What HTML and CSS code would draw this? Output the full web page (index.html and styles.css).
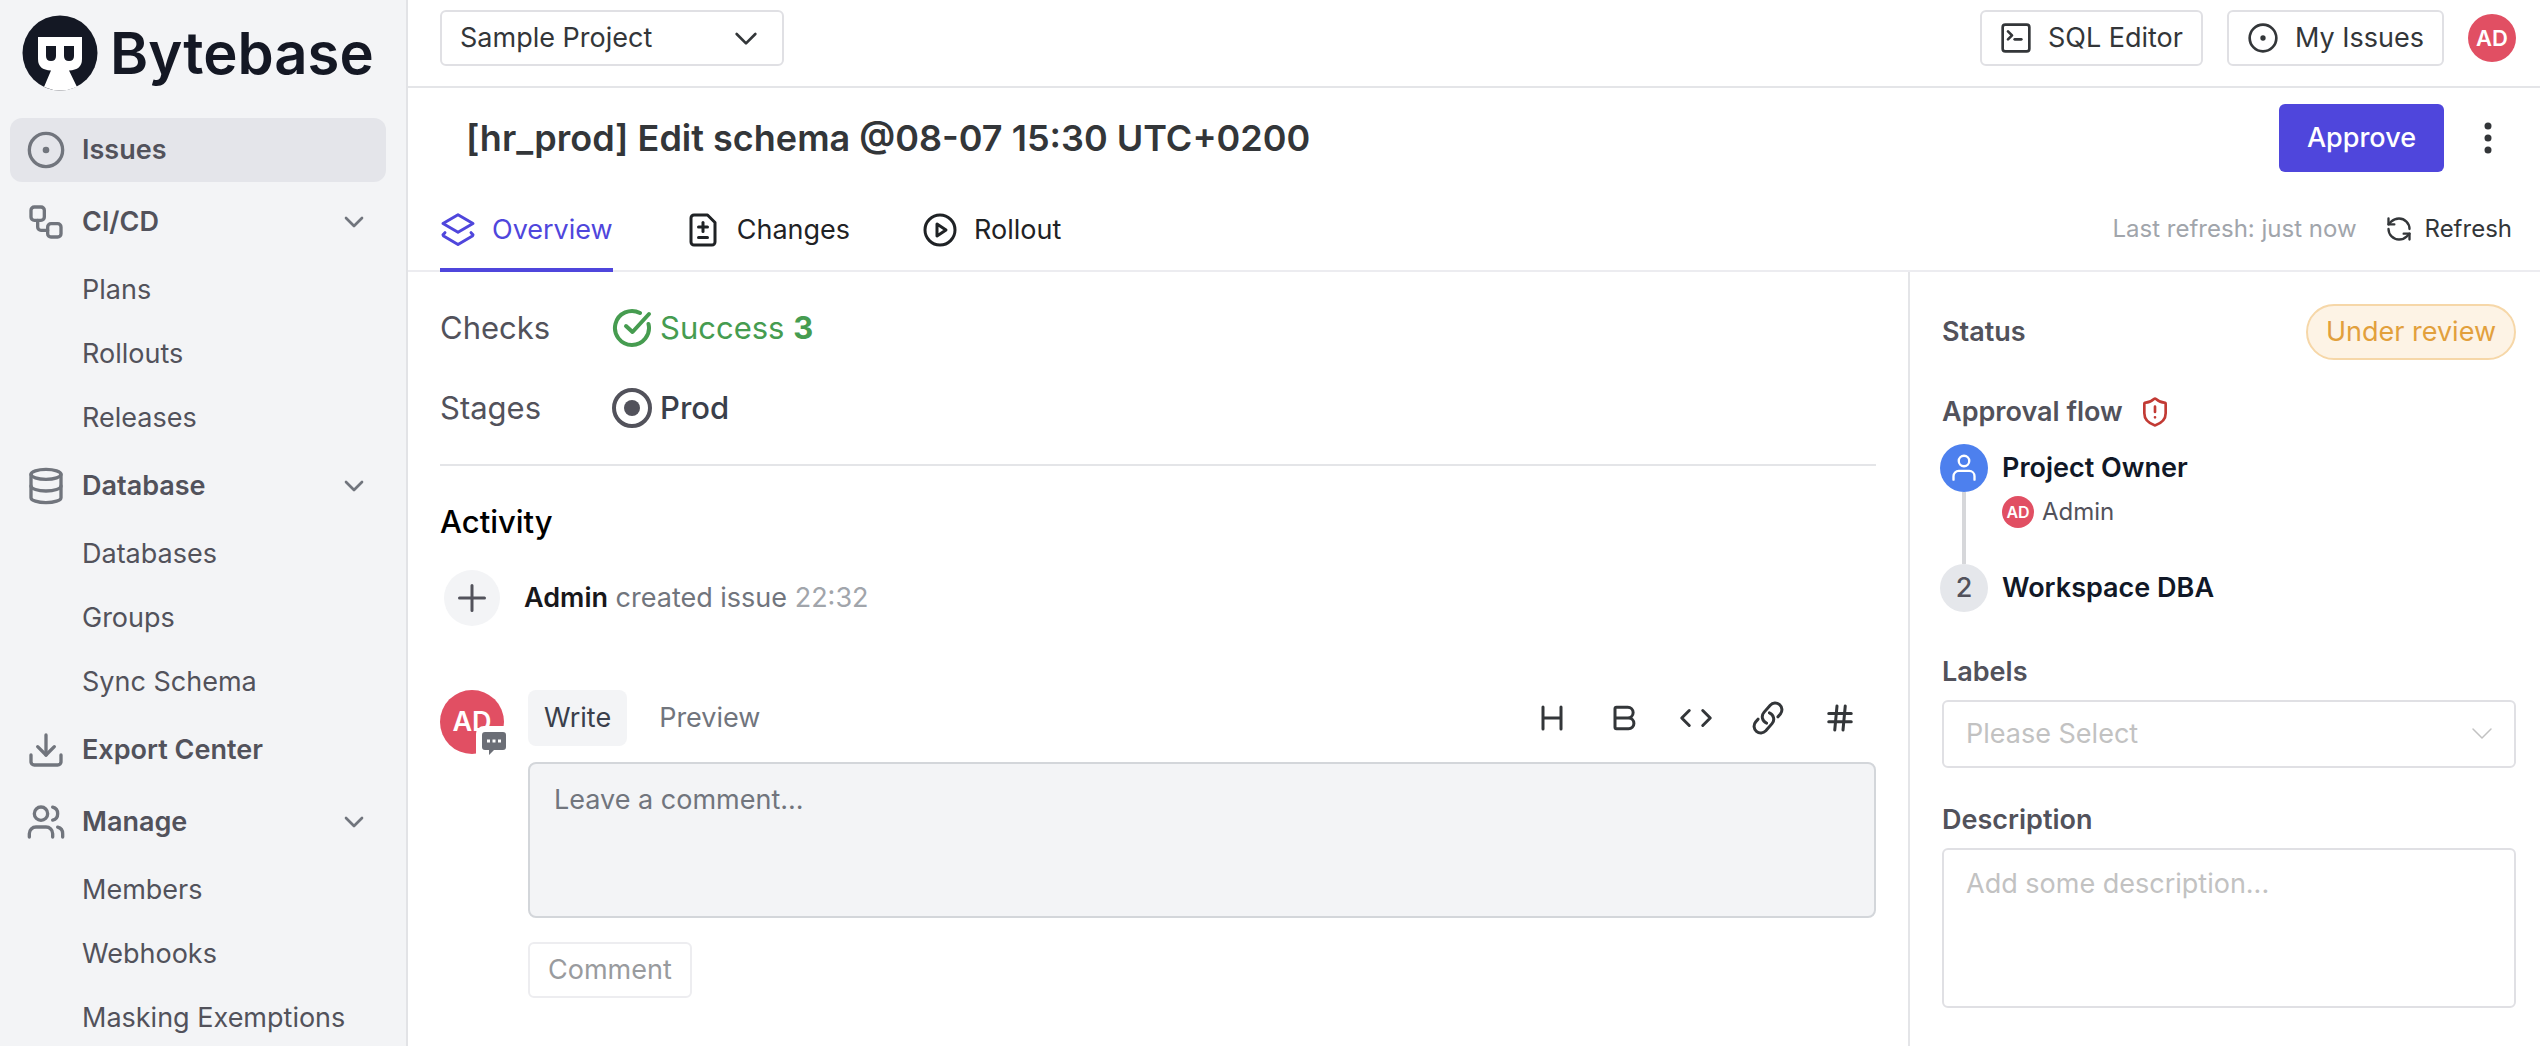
FILE: index.html
```html
<!DOCTYPE html>
<html lang="en">
<head>
<meta charset="utf-8">
<meta name="viewport" content="width=device-width, initial-scale=1">
<title>[hr_prod] Edit schema - Bytebase</title>
<link rel="stylesheet" href="styles.css">
</head>
<body>
<div class="app">
  <aside class="sidebar">
    <a class="brand" href="#">
      <svg class="brand-mark" viewBox="0 0 76 76" aria-hidden="true">
        <circle cx="38" cy="38" r="37.500" fill="#141824"/>
        <path d="M16 22H60V44Q60 55 47 55.500L55 72Q38 79 22 72L29 55.500Q16 55 16 44Z" fill="#fff"/>
        <path d="M24 31H34V41Q34 46 29 46Q24 46 24 41ZM42 31H52V41Q52 46 47 46Q42 46 42 41Z" fill="#141824"/>
      </svg>
      <span class="brand-name">Bytebase</span>
    </a>
    <nav class="nav" aria-label="Project">
      <a class="nav-item is-active" href="#">
        <svg class="icon icon-nav" viewBox="0 0 24 24"><circle cx="12" cy="12" r="10"/><circle cx="12" cy="12" r="1"/></svg>
        <span>Issues</span>
      </a>
      <button class="nav-item" type="button">
        <svg class="icon icon-nav" viewBox="0 0 24 24"><rect x="3" y="3" width="8" height="8" rx="2"/><path d="M7 11v4a2 2 0 0 0 2 2h4"/><rect x="13" y="13" width="8" height="8" rx="2"/></svg>
        <span>CI/CD</span>
        <svg class="icon icon-chevron" viewBox="0 0 24 24"><path d="m6 9 6 6 6-6"/></svg>
      </button>
      <div class="nav-sub">
        <a href="#">Plans</a>
        <a href="#">Rollouts</a>
        <a href="#">Releases</a>
      </div>
      <button class="nav-item" type="button">
        <svg class="icon icon-nav" viewBox="0 0 24 24"><ellipse cx="12" cy="5" rx="9" ry="3"/><path d="M3 5v14a9 3 0 0 0 18 0V5"/><path d="M3 12a9 3 0 0 0 18 0"/></svg>
        <span>Database</span>
        <svg class="icon icon-chevron" viewBox="0 0 24 24"><path d="m6 9 6 6 6-6"/></svg>
      </button>
      <div class="nav-sub">
        <a href="#">Databases</a>
        <a href="#">Groups</a>
        <a href="#">Sync Schema</a>
      </div>
      <a class="nav-item" href="#">
        <svg class="icon icon-nav" viewBox="0 0 24 24"><path d="M21 15v4a2 2 0 0 1-2 2H5a2 2 0 0 1-2-2v-4"/><path d="m7 10 5 5 5-5"/><path d="M12 15V3"/></svg>
        <span>Export Center</span>
      </a>
      <button class="nav-item" type="button">
        <svg class="icon icon-nav" viewBox="0 0 24 24"><path d="M16 21v-2a4 4 0 0 0-4-4H6a4 4 0 0 0-4 4v2"/><circle cx="9" cy="7" r="4"/><path d="M22 21v-2a4 4 0 0 0-3-3.870"/><path d="M16 3.130a4 4 0 0 1 0 7.750"/></svg>
        <span>Manage</span>
        <svg class="icon icon-chevron" viewBox="0 0 24 24"><path d="m6 9 6 6 6-6"/></svg>
      </button>
      <div class="nav-sub">
        <a href="#">Members</a>
        <a href="#">Webhooks</a>
        <a href="#">Masking Exemptions</a>
      </div>
    </nav>
  </aside>

  <div class="page">
    <header class="topbar">
      <button class="btn project-btn" type="button">
        <span>Sample Project</span>
        <svg class="icon icon-md" viewBox="0 0 24 24"><path d="m5 9 7 7 7-7"/></svg>
      </button>
      <div class="topbar-actions">
        <button class="btn" type="button">
          <svg class="icon icon-md" viewBox="0 0 24 24"><rect x="2" y="2" width="20" height="20" rx="2"/><path d="m6 7 3 3-3 3"/><path d="M11 13h5"/></svg>
          <span>SQL Editor</span>
        </button>
        <button class="btn" type="button">
          <svg class="icon icon-md" viewBox="0 0 24 24"><circle cx="12" cy="12" r="10"/><circle cx="12" cy="12" r="1"/></svg>
          <span>My Issues</span>
        </button>
        <span class="avatar avatar-md">AD</span>
      </div>
    </header>

    <div class="issue-head">
      <h1>[hr_prod] Edit schema @08-07 15:30 UTC+0200</h1>
      <div class="issue-actions">
        <button class="btn-primary" type="button">Approve</button>
        <button class="more" type="button" aria-label="More">
          <svg viewBox="0 0 36 36" fill="currentColor"><circle cx="18" cy="6" r="3.500"/><circle cx="18" cy="18" r="3.500"/><circle cx="18" cy="30" r="3.500"/></svg>
        </button>
      </div>
    </div>

    <div class="tabbar">
      <nav class="tabs" aria-label="Issue">
        <a class="tab is-active" href="#">
          <svg class="icon icon-lg" viewBox="0 0 24 24"><path d="M12 1.800 22 7.700 12 13.500 2 7.700Z"/><path d="M3.300 13.800 2 15.200 2.400 16 12 21.700 21.600 16 22 15.200 20.700 13.800"/></svg>
          <span>Overview</span>
        </a>
        <a class="tab" href="#">
          <svg class="icon icon-lg" viewBox="0 0 24 24"><path d="M15 2H6a2 2 0 0 0-2 2v16a2 2 0 0 0 2 2h12a2 2 0 0 0 2-2V7Z"/><path d="M9 10h6"/><path d="M12 13V7"/><path d="M9 17h6"/></svg>
          <span>Changes</span>
        </a>
        <a class="tab" href="#">
          <svg class="icon icon-lg" viewBox="0 0 24 24"><circle cx="12" cy="12" r="10"/><path d="m10 8 6 4-6 4Z"/></svg>
          <span>Rollout</span>
        </a>
      </nav>
      <div class="refresh">
        <span class="refresh-note">Last refresh: just now</span>
        <button class="refresh-btn" type="button">
          <svg class="icon" viewBox="0 0 24 24"><path d="M21 12a9 9 0 0 0-9-9 9.750 9.750 0 0 0-6.740 2.740L3 8"/><path d="M3 3v5h5"/><path d="M3 12a9 9 0 0 0 9 9 9.750 9.750 0 0 0 6.740-2.740L21 16"/><path d="M16 16h5v5"/></svg>
          <span>Refresh</span>
        </button>
      </div>
    </div>

    <div class="content">
      <main class="main">
        <dl class="summary">
          <dt>Checks</dt>
          <dd class="success">
            <svg class="icon" viewBox="0 0 40 40"><path d="M36.500 16A17 17 0 1 1 28 5"/><path d="M14 18l6.500 6L37 6"/></svg>
            <span>Success <strong>3</strong></span>
          </dd>
          <dt>Stages</dt>
          <dd class="stage">
            <svg class="icon" viewBox="0 0 40 40"><circle cx="20" cy="20" r="18"/><circle cx="20" cy="20" r="8" fill="currentColor" stroke="none"/></svg>
            <span>Prod</span>
          </dd>
        </dl>

        <section class="activity">
          <h2>Activity</h2>
          <div class="event">
            <span class="event-icon"><svg class="icon" viewBox="0 0 28 28"><path d="M1.500 14h25M14 1.500v25"/></svg></span>
            <p><strong>Admin</strong> created issue <time>22:32</time></p>
          </div>

          <form class="composer">
            <div class="composer-user">
              <span class="avatar avatar-lg">AD</span>
              <span class="badge">
                <svg viewBox="0 0 24 24"><path d="M3 0H21a3 3 0 0 1 3 3V15a3 3 0 0 1-3 3H12L7 23V18H3a3 3 0 0 1-3-3V3a3 3 0 0 1 3-3Z" fill="#6b6e76"/><path d="M5 7.500h3v3H5zM10.500 7.500h3v3h-3zM16 7.500h3v3h-3z" fill="#fff"/></svg>
              </span>
            </div>
            <div class="composer-body">
              <div class="composer-bar">
                <div class="modes">
                  <button class="mode is-active" type="button">Write</button>
                  <button class="mode" type="button">Preview</button>
                </div>
                <div class="tools">
                  <button type="button" aria-label="Heading"><svg class="icon" viewBox="0 0 24 24"><path d="M6 4.700v14.600M18 4.700v14.600M6 12h12"/></svg></button>
                  <button type="button" aria-label="Bold"><svg class="icon" viewBox="0 0 24 24"><path d="M6 12h8.500a3.600 3.600 0 0 0 0-7.200H7a1 1 0 0 0-1 1v12.400a1 1 0 0 0 1 1h8a3.600 3.600 0 0 0 0-7.200"/></svg></button>
                  <button type="button" aria-label="Code"><svg class="icon" viewBox="0 0 24 24"><path d="m16.500 17 5-5-5-5M7.500 7l-5 5 5 5"/></svg></button>
                  <button type="button" aria-label="Link"><svg class="icon" viewBox="0 0 24 24"><path d="M13.190 8.690a4.500 4.500 0 0 1 1.240 7.240l-4.500 4.500a4.500 4.500 0 0 1-6.360-6.360l1.750-1.760m13.360-.620 1.750-1.760a4.500 4.500 0 0 0-6.360-6.360l-4.500 4.500a4.500 4.500 0 0 0 1.240 7.240" transform="rotate(-4 12 12)"/></svg></button>
                  <button type="button" aria-label="Issue reference"><svg class="icon" viewBox="0 0 24 24"><path d="M4.500 9h15M4.500 14.500h15M10 4 8.500 20M15.500 4 14 20"/></svg></button>
                </div>
              </div>
              <textarea class="comment-box" aria-label="Comment" placeholder="Leave a comment..."></textarea>
              <button class="btn btn-comment" type="submit" disabled>Comment</button>
            </div>
          </form>
        </section>
      </main>

      <aside class="details">
        <div class="detail-row">
          <h3>Status</h3>
          <span class="status-tag">Under review</span>
        </div>
        <section class="approval">
          <h3 class="approval-title">Approval flow
            <svg class="icon" viewBox="0 0 24 24"><path d="M20 13c0 5-3.500 7.500-7.660 8.950a1 1 0 0 1-.67-.01C7.500 20.500 4 18 4 13V6a1 1 0 0 1 1-1c2 0 4.500-1.200 6.240-2.720a1.170 1.170 0 0 1 1.520 0C14.510 3.810 17 5 19 5a1 1 0 0 1 1 1Z"/><path d="M12 8v4M12 16h.010"/></svg>
          </h3>
          <ol class="steps">
            <li class="step">
              <span class="step-dot is-current"><svg class="icon" viewBox="0 0 24 24"><circle cx="12" cy="6" r="4.500"/><path d="M3 22v-3a4.500 4.500 0 0 1 4.500-4.500h9A4.500 4.500 0 0 1 21 19v3"/></svg></span>
              <div class="step-body">
                <strong>Project Owner</strong>
                <span class="approver"><span class="avatar avatar-sm">AD</span>Admin</span>
              </div>
            </li>
            <li class="step">
              <span class="step-dot">2</span>
              <div class="step-body"><strong>Workspace DBA</strong></div>
            </li>
          </ol>
        </section>
        <div class="field">
          <label for="labels">Labels</label>
          <div class="select-wrap">
            <select id="labels"><option>Please Select</option></select>
            <svg class="icon" viewBox="0 0 24 24"><path d="m3 7 9 9 9-9"/></svg>
          </div>
        </div>
        <div class="field">
          <label for="description">Description</label>
          <textarea id="description" placeholder="Add some description..."></textarea>
        </div>
      </aside>
    </div>
  </div>
</div>
</body>
</html>
```
FILE: styles.css
```css
*, *::before, *::after { box-sizing: border-box; }

body {
  margin: 0;
  font-family: Inter, "Liberation Sans", sans-serif;
  font-size: 27px;
  line-height: 40px;
  color: #333639;
  background: #fff;
}

a { color: inherit; text-decoration: none; }
h1, h2, h3, p, dl, dd, ol { margin: 0; padding: 0; }
ol { list-style: none; }
button, select, textarea { font: inherit; color: inherit; margin: 0; }
button { background: none; border: 0; padding: 0; text-align: left; }
textarea { display: block; width: 100%; resize: none; }

.icon {
  flex: none;
  width: 24px;
  height: 24px;
  fill: none;
  stroke: currentColor;
  stroke-width: 2;
  stroke-linecap: round;
  stroke-linejoin: round;
}
.icon-md { width: 32px; height: 32px; }
.icon-lg { width: 36px; height: 36px; }

.app { display: flex; height: 100vh; overflow: hidden; }

/* Sidebar */
.sidebar {
  flex: none;
  width: 408px;
  background: #f3f4f6;
  border-right: 2px solid #e2e3e6;
  overflow: hidden;
}
.brand { display: flex; align-items: center; gap: 12px; height: 114px; padding: 16px 20px 24px 22px; }
.brand-mark { flex: none; width: 76px; height: 76px; }
.brand-name { font-size: 58px; line-height: 64px; font-weight: 600; color: #141824; }
.nav { display: flex; flex-direction: column; padding: 0 20px 0 10px; }
.nav-item {
  display: flex;
  align-items: center;
  gap: 16px;
  height: 64px;
  margin: 4px 0;
  padding: 0 16px;
  border-radius: 12px;
  font-weight: 600;
  color: #52525b;
}
.nav-item.is-active { background: #e4e5ea; }
.icon-nav { width: 40px; height: 40px; color: #71757d; }
.icon-chevron { width: 32px; height: 32px; margin-left: auto; color: #71757d; }
.nav-sub { display: flex; flex-direction: column; color: #52525b; }
.nav-sub a { padding: 12px 0 12px 72px; }

/* Top bar */
.page { flex: 1; min-width: 0; display: flex; flex-direction: column; }
.topbar {
  display: flex;
  justify-content: space-between;
  align-items: center;
  height: 88px;
  padding: 0 24px 10px 32px;
  border-bottom: 2px solid #e4e5e8;
}
.topbar-actions { display: flex; align-items: center; gap: 24px; }
.btn {
  display: flex;
  align-items: center;
  gap: 16px;
  height: 56px;
  padding: 0 18px;
  border: 2px solid #e0e0e4;
  border-radius: 6px;
}
.project-btn { width: 344px; padding-right: 20px; justify-content: space-between; }
.avatar {
  display: flex;
  align-items: center;
  justify-content: center;
  flex: none;
  border-radius: 50%;
  background: #e14f63;
  color: #fff;
  font-weight: 600;
}
.avatar-sm { width: 32px; height: 32px; font-size: 16px; }
.avatar-md { width: 48px; height: 48px; font-size: 22px; }
.avatar-lg { width: 64px; height: 64px; font-size: 27px; }

/* Issue header */
.issue-head {
  display: flex;
  justify-content: space-between;
  align-items: center;
  padding: 16px 32px 16px 58px;
}
h1 { font-size: 36px; line-height: 48px; font-weight: 600; }
.issue-actions { display: flex; align-items: center; gap: 24px; }
.btn-primary {
  height: 68px;
  padding: 0 28px;
  border-radius: 6px;
  background: #4f46dc;
  color: #fff;
  font-weight: 500;
}
.more { display: flex; }
.more svg { width: 40px; height: 36px; }

.tabbar {
  display: flex;
  justify-content: space-between;
  padding: 0 28px 0 32px;
  border-bottom: 2px solid #ececf0;
}
.tabs { display: flex; gap: 72px; }
.tab {
  display: flex;
  align-items: center;
  gap: 16px;
  height: 84px;
  margin-bottom: -2px;
  padding-top: 4px;
  border-bottom: 4px solid transparent;
  color: #1f2225;
}
.tab.is-active { color: #4f46dc; border-color: #4f46dc; }
.refresh { display: flex; align-items: center; gap: 28px; font-size: 24px; }
.refresh-note { color: #a1a5ab; }
.refresh-btn { display: flex; align-items: center; gap: 12px; }
.refresh-btn .icon { width: 28px; height: 28px; }

/* Content */
.content { flex: 1; display: flex; min-height: 0; }
.main { flex: 1; min-width: 0; padding: 36px 32px 0; }
.summary {
  display: grid;
  grid-template-columns: 172px 1fr;
  row-gap: 40px;
  padding-bottom: 36px;
  border-bottom: 2px solid #e4e5e8;
  font-size: 31px;
  color: #52525b;
}
.summary dd { display: flex; align-items: center; gap: 8px; }
.summary .icon { width: 40px; height: 40px; stroke-width: 4; }
.success { color: #469c50; }
.success strong { font-weight: 700; }
.stage span { font-weight: 500; color: #3a3f4b; }

h2 { padding-top: 36px; font-size: 31px; line-height: 40px; font-weight: 500; color: #000; }
.event { display: flex; align-items: center; gap: 24px; padding: 28px 4px 64px; color: #71757d; }
.event-icon {
  display: flex;
  align-items: center;
  justify-content: center;
  width: 56px;
  height: 56px;
  border-radius: 50%;
  background: #f3f4f6;
  color: #52525b;
}
.event-icon .icon { width: 28px; height: 28px; stroke-width: 3; }
.event strong { font-weight: 600; color: #18181b; }
.event time { color: #a1a5ab; }

.composer { display: flex; gap: 24px; }
.composer-user { position: relative; flex: none; width: 64px; height: 64px; }
.badge {
  position: absolute;
  left: 36px;
  top: 36px;
  display: flex;
  padding: 6px 0 0 6px;
  border-top-left-radius: 8px;
  background: #fff;
}
.badge svg { width: 24px; height: 24px; }
.composer-body { flex: 1; min-width: 0; }
.composer-bar { display: flex; justify-content: space-between; align-items: center; margin-bottom: 16px; }
.modes { display: flex; gap: 16px; }
.mode { height: 56px; padding: 0 16px; border-radius: 8px; color: #71757d; }
.mode.is-active { background: #f3f4f6; color: #3a3f4b; }
.tools { display: flex; gap: 36px; padding-right: 18px; }
.tools button { display: flex; }
.tools .icon { width: 36px; height: 36px; }
.comment-box {
  height: 156px;
  padding: 16px 24px;
  border: 2px solid #d3d6da;
  border-radius: 8px;
  background: #f3f4f6;
}
.comment-box::placeholder { color: #71757d; opacity: 1; }
.btn-comment { margin-top: 24px; border-color: #ededf0; color: #999b9e; }

/* Details */
.details {
  flex: none;
  width: 632px;
  padding: 32px 24px 0 32px;
  border-left: 2px solid #e4e5e8;
}
h3, .field label { font-size: 27px; line-height: 40px; font-weight: 600; color: #52525b; }
.detail-row { display: flex; justify-content: space-between; align-items: center; }
.status-tag {
  height: 56px;
  padding: 6px 18px;
  border: 2px solid #f6d7a8;
  border-radius: 28px;
  background: #fdf3e5;
  color: #e2a03c;
}
.approval { padding-top: 32px; }
.approval-title { display: flex; align-items: center; gap: 16px; }
.approval-title .icon { width: 32px; height: 32px; color: #c23a34; }
.steps { margin: 12px 0 40px -2px; }
.step { position: relative; display: flex; gap: 14px; min-height: 48px; }
.step:not(:last-child) { min-height: 120px; }
.step:not(:last-child)::before {
  content: "";
  position: absolute;
  left: 22px;
  top: 48px;
  bottom: 0;
  width: 4px;
  background: #d6d7da;
}
.step-dot {
  display: flex;
  align-items: center;
  justify-content: center;
  flex: none;
  width: 48px;
  height: 48px;
  border-radius: 50%;
  background: #e5e7eb;
  font-weight: 500;
  color: #52525b;
}
.step-dot.is-current { background: #4d80ee; color: #fff; }
.step-dot .icon { width: 28px; height: 28px; }
.step-body { padding-top: 4px; }
.step-body strong { display: block; font-weight: 600; color: #111827; }
.approver { display: flex; align-items: center; gap: 8px; padding-top: 4px; font-size: 24px; color: #52525b; }

.field { margin-bottom: 32px; }
.field label { display: block; margin-bottom: 8px; }
.select-wrap { display: grid; align-items: center; }
.select-wrap > * { grid-area: 1 / 1; }
.select-wrap .icon { margin-right: 22px; justify-self: end; stroke-width: 1.5; color: #c2c2c2; pointer-events: none; }
.field select, .field textarea {
  width: 100%;
  border: 2px solid #e0e0e4;
  border-radius: 6px;
  background: #fff;
}
.field select { appearance: none; height: 68px; padding: 0 22px; color: #c2c2c2; }
.field textarea { height: 160px; padding: 14px 22px; }
.field textarea::placeholder { color: #c2c2c2; opacity: 1; }
```
